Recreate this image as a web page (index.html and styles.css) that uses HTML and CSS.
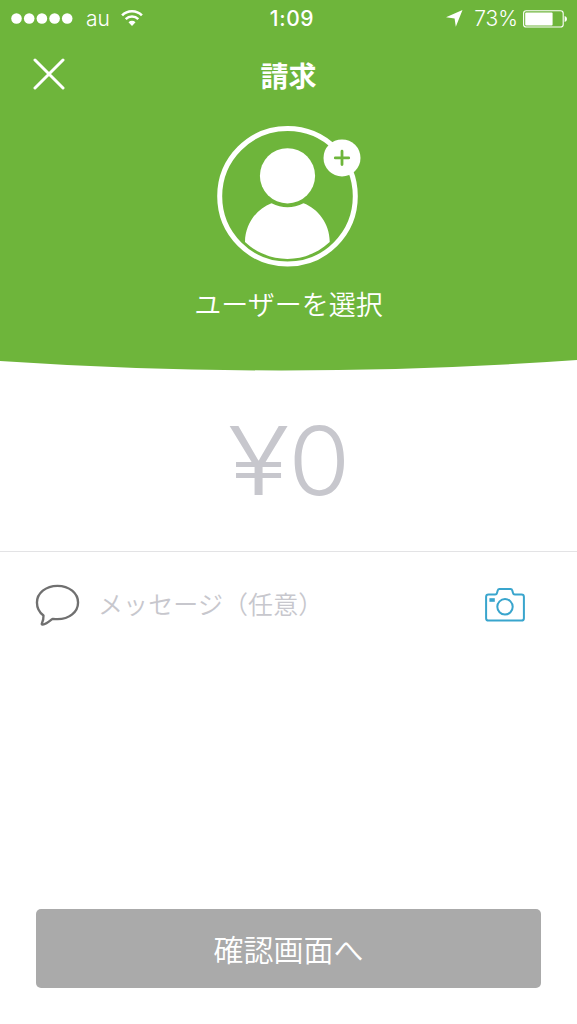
FILE: index.html
```html
<!DOCTYPE html>
<html lang="ja">
<head>
    <meta charset="UTF-8">
    <meta name="viewport" content="width=device-width, initial-scale=1.0">
    <title>請求</title>
    <link rel="stylesheet" href="styles.css">
</head>
<body>
    <div class="screen">
        <header class="header">
            <div class="status-bar">
                <div class="status-left">
                    <svg class="signal" width="62" height="12" viewBox="0 0 62 12">
                        <circle cx="5.5" cy="5.5" r="5.3"/>
                        <circle cx="18.2" cy="5.5" r="5.3"/>
                        <circle cx="30.9" cy="5.5" r="5.3"/>
                        <circle cx="43.6" cy="5.5" r="5.3"/>
                        <circle cx="56.2" cy="5.5" r="5.3"/>
                    </svg>
                    <span class="carrier">au</span>
                    <svg class="wifi" width="22" height="17" viewBox="0 0 22 17">
                        <path d="M1.1 5.4 A14 14 0 0 1 20.9 5.4" fill="none" stroke="#fff" stroke-width="2.6"/>
                        <path d="M4.7 9.1 A8.9 8.9 0 0 1 17.3 9.1" fill="none" stroke="#fff" stroke-width="2.5"/>
                        <path d="M7.5 12.3 A5 5 0 0 1 14.5 12.3 L11 16 Z" fill="#fff"/>
                    </svg>
                </div>
                <div class="status-time">1:09</div>
                <div class="status-right">
                    <svg class="location" width="17" height="17" viewBox="0 0 17 17">
                        <path d="M0 7.2 L16.5 0 L9.8 16.8 L8.6 8.4 Z" fill="#fff"/>
                    </svg>
                    <span class="percent">73%</span>
                    <svg class="battery" width="44" height="18" viewBox="0 0 44 18">
                        <rect x=".6" y=".8" width="39.6" height="16.2" rx="2.6" fill="none" stroke="#fff" stroke-width="1.1"/>
                        <rect x="2.2" y="2.5" width="27.4" height="13" rx="1" fill="#fff"/>
                        <path d="M41.6 6 Q44 6.5 44 9 Q44 11.5 41.6 12 Z" fill="#fff"/>
                    </svg>
                </div>
            </div>

            <div class="nav-bar">
                <button class="close" type="button" aria-label="閉じる">
                    <svg width="32" height="32" viewBox="0 0 32 32">
                        <path d="M2 2 L30 30 M30 2 L2 30" stroke="#fff" stroke-width="3" stroke-linecap="round"/>
                    </svg>
                </button>
                <h1>請求</h1>
            </div>

            <div class="user">
                <svg class="avatar" width="146" height="142" viewBox="0 0 146 142">
                    <circle cx="71.5" cy="71.3" r="67.8" fill="none" stroke="#fff" stroke-width="5"/>
                    <circle cx="71.5" cy="50.8" r="27.6" fill="#fff"/>
                    <path d="M55.5 78.2 Q71.5 86.4 87.5 78.2 C102 83.5 114 99 113.7 117 C90 139.5 53 139.5 29 117 C29 99 41 83.5 55.5 78.2 Z" fill="#fff"/>
                    <circle cx="126" cy="32.9" r="18.5" fill="#fff"/>
                    <path d="M119.3 32.9 H132.7 M126 26.2 V39.6" stroke="#6eb53b" stroke-width="2.8" stroke-linecap="round"/>
                </svg>
                <div class="user-label">ユーザーを選択</div>
            </div>
        </header>
        <svg class="curve" width="577" height="12" viewBox="0 0 577 12" preserveAspectRatio="none">
            <path d="M0 0 V1 Q288.5 20.4 577 0 Z" fill="#6eb53b"/>
        </svg>

        <div class="amount"><span class="yen">¥</span><span class="zero">0</span></div>

        <div class="message">
            <svg class="bubble" width="45" height="43" viewBox="0 0 44 43" preserveAspectRatio="none">
                <path d="M22 1.8 C33.5 1.8 42.1 9.2 42.1 18.5 C42.1 28 33.5 35.2 22 35.2 C20 35.2 18.7 35 17.2 34.8 C14 37.5 11 40.3 7.5 40.6 C6.6 40.7 6.4 40 6.8 39.2 C8 36.7 8.4 34.4 8.3 31.5 C4 28.3 1.9 23.8 1.9 18.5 C1.9 9.2 10.5 1.8 22 1.8 Z" fill="none" stroke="#707070" stroke-width="2.3" stroke-linejoin="round"/>
            </svg>
            <span class="placeholder">メッセージ（任意）</span>
            <svg class="camera" width="40" height="34" viewBox="0 0 40 34">
                <path d="M3.5 6.4 H10.2 Q11.7 6.4 12 5 L12.7 2.5 Q13.1 1.1 14.5 1.1 H25.5 Q26.9 1.1 27.3 2.5 L28 5 Q28.3 6.4 29.8 6.4 H36.5 Q38.9 6.4 38.9 8.8 V30.2 Q38.9 32.6 36.5 32.6 H3.5 Q1.1 32.6 1.1 30.2 V8.8 Q1.1 6.4 3.5 6.4 Z" fill="none" stroke="#39a5cd" stroke-width="2"/>
                <circle cx="20" cy="18.8" r="7.7" fill="none" stroke="#39a5cd" stroke-width="2"/>
                <rect x="4.4" y="10.2" width="5.4" height="3.6" fill="#39a5cd"/>
            </svg>
        </div>

        <button class="confirm" type="button">確認画面へ</button>
    </div>
</body>
</html>
```

FILE: styles.css
```css
* {
    box-sizing: border-box;
}

body {
    margin: 0;
    background-color: #fff;
    font-family: Inter, "Noto Sans CJK JP", sans-serif;
    overflow: hidden;
}

svg {
    display: block;
    flex-shrink: 0;
}

button {
    padding: 0;
    border: none;
    background: none;
    font-family: inherit;
    cursor: pointer;
}

.screen {
    display: flex;
    flex-direction: column;
    height: 1024px;
}

.header {
    height: 360px;
    background-color: #6eb53b;
    color: #fff;
}

.status-bar {
    display: grid;
    grid-template-columns: 1fr auto 1fr;
    align-items: center;
    height: 37px;
    padding: 0 10px 0 11px;
    font-size: 21px;
    line-height: 37px;
}

.status-left,
.status-right {
    display: flex;
    align-items: center;
}

.status-right {
    justify-content: flex-end;
}

.signal {
    fill: #fff;
}

.carrier {
    width: 24px;
    margin: 0 11px 0 13px;
    font-weight: 350;
}

.status-time {
    padding-left: 6px;
    font-weight: 500;
    letter-spacing: 0.6px;
}

.location {
    margin-right: 11px;
}

.percent {
    margin-right: 5px;
    font-weight: 350;
}

.nav-bar {
    display: grid;
    grid-template-columns: 32px 1fr 32px;
    align-items: center;
    height: 76px;
    padding: 0 33px;
}

.close {
    height: 32px;
    margin-top: -3px;
}

.nav-bar h1 {
    margin: 4px 0 0;
    font-size: 28px;
    font-weight: 700;
    line-height: 40px;
    text-align: center;
}

.user {
    display: flex;
    flex-direction: column;
    align-items: center;
    padding-top: 12px;
}

.avatar {
    margin-left: 1px;
}

.user-label {
    margin-top: 19px;
    font-size: 27px;
    font-weight: 350;
    line-height: 40px;
}

.curve {
    width: 100%;
}

.amount {
    display: flex;
    justify-content: center;
    height: 180px;
    padding-left: 5px;
    border-bottom: 1px solid #e3e3e5;
    color: #c7c7cd;
    font-size: 95px;
    font-weight: 320;
    line-height: 178px;
}

/* the yen sign is drawn wider than the font has it */
.yen {
    transform: scaleX(1.2);
}

.zero {
    margin-left: 6px;
    transform: scaleX(1.06);
}

.message {
    display: flex;
    align-items: center;
    height: 106px;
    padding: 0 52px 0 35px;
}

.placeholder {
    flex: 1;
    margin-left: 18px;
    color: #c7c7cd;
    font-size: 25px;
    font-weight: 350;
    line-height: 40px;
    letter-spacing: 0.1px;
}

.confirm {
    height: 79px;
    margin: auto 36px 36px;
    padding-bottom: 2px;
    border-radius: 5px;
    background-color: #aaa;
    color: #fff;
    font-size: 30px;
    font-weight: 350;
}
```
